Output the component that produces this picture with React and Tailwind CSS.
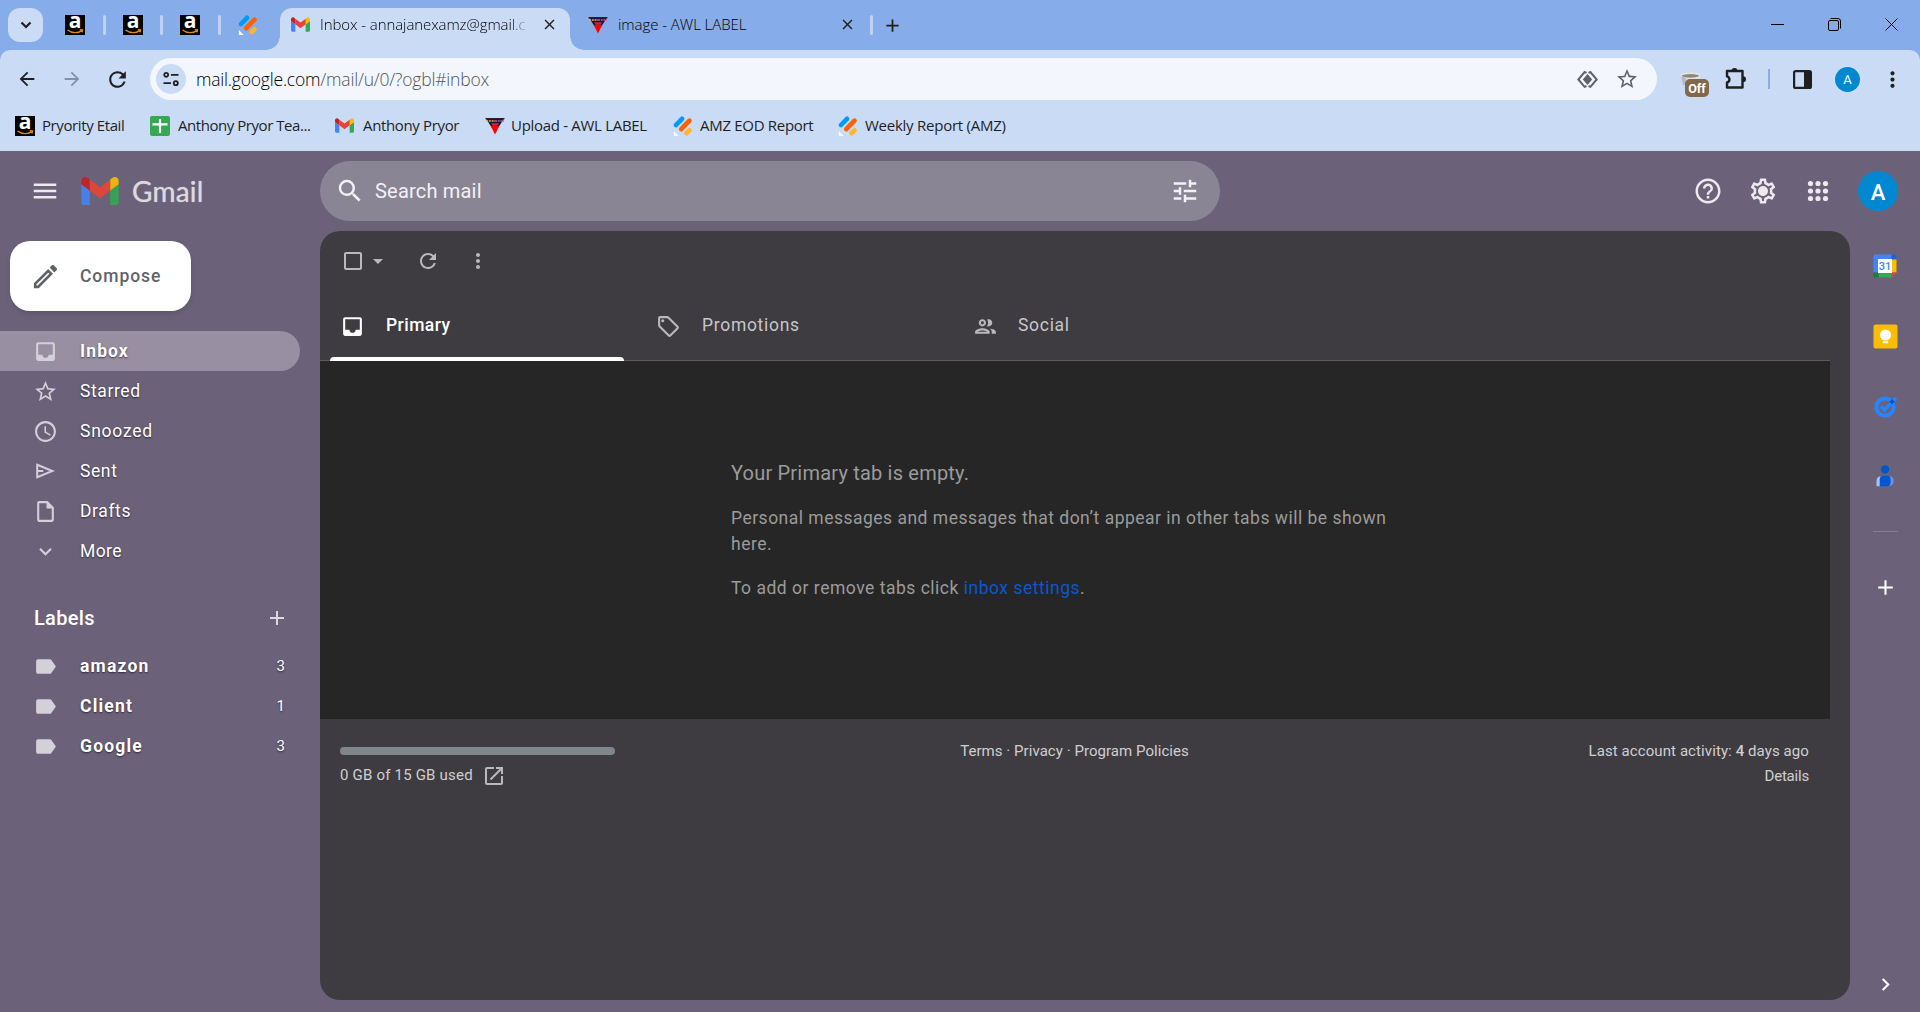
import {
  MdAccessTime,
  MdAdd,
  MdArrowBack,
  MdArrowDropDown,
  MdArrowForward,
  MdCheckBoxOutlineBlank,
  MdChevronRight,
  MdClose,
  MdHelpOutline,
  MdInbox,
  MdKeyboardArrowDown,
  MdLabel,
  MdMenu,
  MdMoreVert,
  MdOpenInNew,
  MdOutlineEdit,
  MdOutlineGroup,
  MdOutlineInsertDriveFile,
  MdOutlineLocalOffer,
  MdOutlineSettings,
  MdRefresh,
  MdSearch,
  MdStarBorder,
  MdTune,
} from 'react-icons/md'

/* ---------- Favicons and logos ---------- */

function AmazonIcon() {
  return (
    <svg className="w-5 h-5 shrink-0 overflow-visible" viewBox="0 0 20 20">
      <rect width="20" height="20" fill="#000" />
      <text x="10" y="13.300" fontSize="21" fontWeight="700" textAnchor="middle" fill="#fff" fontFamily="Open Sans">a</text>
      <path d="M2.500 15c4.500 3.400 10.500 3.400 14 .6M14.800 14.800l2.700.2-.6 2.400" fill="none" stroke="#e08a1a" strokeWidth="1.400" />
    </svg>
  )
}

function GmailIcon({ className }) {
  return (
    <svg className={className} viewBox="52 42 88 66">
      <path fill="#4285f4" d="M58 108h14V74L52 59v43c0 3.320 2.690 6 6 6" />
      <path fill="#34a853" d="M120 108h14c3.320 0 6-2.690 6-6V59l-20 15" />
      <path fill="#fbbc04" d="M120 48v26l20-15v-8c0-7.420-8.470-11.650-14.400-7.200" />
      <path fill="#ea4335" d="M72 74V48l24 18 24-18v26L96 92" />
      <path fill="#c5221f" d="M52 51v8l20 15V48l-5.600-4.200c-5.940-4.450-14.400-.22-14.400 7.200" />
    </svg>
  )
}

function JotformIcon() {
  return (
    <svg className="w-5 h-5 shrink-0" viewBox="0 0 20 20" fill="none" strokeLinecap="round" strokeWidth="4.600">
      <path stroke="#0099ff" d="M3 9l6-6.200" />
      <path stroke="#ff6100" d="M8.200 13.200l8.300-8.600" />
      <path stroke="#ffb629" d="M13.600 17.200l2.800-2.900" />
      <path fill="#fff" d="M.8 15v4.200c0 .5.300.8.8.8h4.200z" />
    </svg>
  )
}

function AwlIcon() {
  return (
    <svg className="w-5 h-5 shrink-0" viewBox="0 0 20 20">
      <path fill="#1b1238" d="M.6 2h18.800L13 12H7z" />
      <path fill="#3a1530" d="M.6 2h18.800v1.400H.6z" />
      <path stroke="#e8b84a" strokeWidth="1.300" strokeDasharray="2 .8" d="M1 5h9" />
      <path stroke="#c65a9c" strokeWidth="1.500" strokeDasharray="2 .7" d="M10 5h9" />
      <path fill="#e02030" d="M6 7.300h8L12.500 9.800h-5z" />
      <path fill="#f00" d="M5.800 10h8.400L10 18.500z" />
    </svg>
  )
}

function SheetIcon() {
  return (
    <svg className="w-5 h-5 shrink-0" viewBox="0 0 20 20">
      <rect width="20" height="20" rx="2" fill="#34a853" />
      <path d="M10 3v14M2.500 8.300h15" stroke="#fff" strokeWidth="2.200" />
    </svg>
  )
}

function SendIcon() {
  return (
    <svg className="w-[19px] h-4" viewBox="0 0 19 16" fill="none" stroke="currentColor" strokeWidth="2">
      <path d="M1.200 1.800L16.500 8 1.200 14.200z" />
      <path d="M1.200 8h6" />
    </svg>
  )
}

/* ---------- Browser chrome ---------- */

function PinnedTab({ children, last }) {
  return (
    <div className="relative w-[57.5px] h-[50px] flex items-center justify-center">
      {children}
      {!last && <span className="absolute -right-[1.500px] top-[15px] w-[3px] h-5 rounded-full bg-[#bfd4f5]" />}
    </div>
  )
}

function TabStrip() {
  return (
    <div className="h-[50px] flex items-center bg-[#86ace9] pl-2 text-[#1f1f1f]">
      <button className="w-[35px] h-[34px] rounded-xl bg-[#cadbf6] flex items-center justify-center mr-[3.500px]">
        <svg className="w-3 h-2" viewBox="0 0 12 8" fill="none" stroke="#1f1f1f" strokeWidth="2.200">
          <path d="M1.500 1.500L6 6l4.500-4.500" />
        </svg>
      </button>
      <PinnedTab><AmazonIcon /></PinnedTab>
      <PinnedTab><AmazonIcon /></PinnedTab>
      <PinnedTab><AmazonIcon /></PinnedTab>
      <PinnedTab last><JotformIcon /></PinnedTab>

      <div className="relative self-end ml-[3.500px] w-[290px] h-[42px] rounded-t-xl bg-[#cadbf6] flex items-center pl-[11px] pb-[9px]">
        <span className="absolute -left-3.5 bottom-0 w-3.5 h-3.5 bg-[radial-gradient(circle_at_0_0,transparent_13.500px,#cadbf6_14px)]" />
        <span className="absolute -right-3.5 bottom-0 w-3.5 h-3.5 bg-[radial-gradient(circle_at_100%_0,transparent_13.500px,#cadbf6_14px)]" />
        <GmailIcon className="w-[19px] h-[15px]" />
        <span className="ml-2.5 w-[208px] whitespace-nowrap text-[15px] font-light text-black tracking-[-0.08px] mask-r-from-92% mask-r-to-100%">
          Inbox - annajanexamz@gmail.c
        </span>
        <MdClose className="ml-[13px] w-[17px] h-[17px]" />
      </div>

      <div className="flex items-center w-[300px] pl-[18px] pb-px">
        <AwlIcon />
        <span className="ml-2.5 w-[221px] whitespace-nowrap text-[15px] font-light text-black tracking-[-0.05px]">image - AWL LABEL</span>
        <MdClose className="w-[17px] h-[17px]" />
      </div>
      <span className="w-[3px] h-5 rounded-full bg-[#bfd4f5]" />
      <MdAdd className="ml-[9px] w-[21px] h-[21px]" />

      <div className="ml-auto flex items-center gap-[44px] pr-[22px] pb-[2px] text-black">
        <svg className="w-[13px] h-[13px]" viewBox="0 0 13 13"><path d="M0 6.500h13" stroke="currentColor" /></svg>
        <svg className="w-[13px] h-[13px]" viewBox="0 0 13 13" fill="none" stroke="currentColor">
          <rect x=".5" y="2.500" width="10" height="10" rx="1.500" />
          <path d="M2.500.5H10A2.500 2.500 0 0 1 12.500 3v7.500" />
        </svg>
        <svg className="w-[13px] h-[13px]" viewBox="0 0 13 13"><path d="M.5.5l12 12M12.500.5l-12 12" stroke="currentColor" /></svg>
      </div>
    </div>
  )
}

function AddressBar() {
  return (
    <div className="flex items-center h-[42px] pl-4 text-[#1f1f1f]">
      <MdArrowBack className="w-[22px] h-[22px]" />
      <MdArrowForward className="ml-[23px] w-[22px] h-[22px] text-[#8391a8]" />
      <MdRefresh className="ml-[22px] w-[25px] h-[25px]" />
      <div className="ml-5 w-[1507px] h-[42px] rounded-full bg-[#f3f7fd] flex items-center pl-1.5 pr-[18px]">
        <span className="w-[30px] h-[30px] rounded-full bg-[#cadbf6] flex items-center justify-center">
          <svg className="w-4 h-4" viewBox="0 0 16 16" fill="none" stroke="#1f1f1f" strokeWidth="1.800">
            <circle cx="3.200" cy="3.800" r="2" />
            <path d="M8 3.800h7.500M.5 12.200H8" />
            <circle cx="12.800" cy="12.200" r="2" />
          </svg>
        </span>
        <span className="ml-2.5 text-[17.5px] font-light text-black whitespace-nowrap tracking-[-0.2px]">
          mail.google.com<span className="text-[#50545a]">/mail/u/0/?ogbl#inbox</span>
        </span>
        <svg className="ml-auto w-[21px] h-[17px]" viewBox="0 0 21 17" fill="none" stroke="#5f6368" strokeWidth="2">
          <path d="M9.500 1.800L7.600 1 1.300 8.500l6.300 7.300 1.900-.8M11.500 1.800l1.900-.8 6.300 7.500-6.300 7.300-1.900-.8" />
          <path d="M10.500 3l4.700 5.500-4.700 5.500-4.700-5.500z" fill="#5f6368" stroke="none" />
        </svg>
        <MdStarBorder className="ml-[17px] w-6 h-6 text-[#5f6368]" />
      </div>
      <div className="relative ml-[23px] w-[30px] h-[30px]">
        <svg className="w-5 h-5 mt-2" viewBox="0 0 20 20">
          <ellipse cx="10.500" cy="3.800" rx="9.500" ry="2.600" fill="#8b8982" stroke="#e9e7e0" strokeWidth="1.400" />
          <path d="M1 4l2 9h3V6z" fill="#b9bbbb" />
        </svg>
        <span className="absolute left-[5px] top-[15px] w-6 h-[18px] rounded-[5px] bg-[#82684a] text-white font-['Roboto',sans-serif] font-bold text-[12.5px] leading-[19px] text-center">
          Off
        </span>
      </div>
      <svg className="ml-[15px] w-[22px] h-[22px]" viewBox="0 0 22 22">
        <path d="M3 3h14.500v16.500H2v-5a3.200 3.200 0 0 0 0-6.200V3z" fill="none" stroke="currentColor" strokeWidth="2.400" strokeLinejoin="round" />
        <path d="M6.500 3a3 3 0 0 1 6 0zM18 8.300a3 3 0 0 1 0 6z" fill="currentColor" />
      </svg>
      <span className="ml-[21px] w-0.5 h-5 bg-[#86ace9]" />
      <svg className="ml-[23px] w-[19px] h-[19px]" viewBox="0 0 19 19">
        <rect x="1.100" y="1.100" width="16.800" height="16.800" rx="1.500" fill="none" stroke="currentColor" strokeWidth="2.200" />
        <path d="M11 1h7v17h-7z" fill="currentColor" />
      </svg>
      <span className="ml-[23px] w-[25px] h-[25px] rounded-full bg-[#0288d1] text-white text-[13px] leading-[26px] text-center font-['Roboto',sans-serif]">
        A
      </span>
      <MdMoreVert className="ml-[20px] w-[25px] h-[25px]" />
    </div>
  )
}

function Bookmarks() {
  return (
    <div className="flex items-center h-[51px] pl-[15px] text-[15px] text-[#1f1f1f] whitespace-nowrap">
      <div className="w-[135px] flex items-center gap-[7px]"><AmazonIcon /><span className="tracking-[-0.4px]">Pryority Etail</span></div>
      <div className="w-[185px] flex items-center gap-2"><SheetIcon /><span className="tracking-[-0.45px]">Anthony Pryor Tea...</span></div>
      <div className="w-[150px] flex items-center gap-[9px]">
        <GmailIcon className="w-[19px] h-[15px]" />
        <span className="tracking-[-0.35px]">Anthony Pryor</span>
      </div>
      <div className="w-[188px] flex items-center gap-1.5"><AwlIcon /><span className="tracking-[-0.3px]">Upload - AWL LABEL</span></div>
      <div className="w-[165px] flex items-center gap-[7px]"><JotformIcon /><span className="tracking-[-0.3px]">AMZ EOD Report</span></div>
      <div className="flex items-center gap-[7px]"><JotformIcon /><span className="tracking-[-0.25px]">Weekly Report (AMZ)</span></div>
    </div>
  )
}

function BrowserChrome() {
  return (
    <div className="bg-[#86ace9] font-['Open_Sans','Noto_Sans',sans-serif]">
      <TabStrip />
      <div className="h-[101px] rounded-t-[10px] bg-[#cadbf6] pt-2">
        <AddressBar />
        <Bookmarks />
      </div>
    </div>
  )
}

/* ---------- Gmail ---------- */

function Header() {
  return (
    <header className="h-20 shrink-0 flex items-center pl-[30px] pr-[22px] text-[#ece9ef]">
      <MdMenu className="w-[30px] h-[30px]" />
      <GmailIcon className="ml-[21px] w-[38px] h-[28px] opacity-90" />
      <span className="ml-[13px] w-[188px] font-['Lato',sans-serif] text-[28px] leading-8 tracking-[0.2px] text-[#dcdae0] text-shadow-[0_0_1px_rgba(220,218,224,0.8)]">
        Gmail
      </span>
      <div className="w-[900px] h-[60px] rounded-full bg-[#8a8595] flex items-center pl-[15px] pr-5 text-[#f3f1f5]">
        <MdSearch className="w-[30px] h-[30px]" />
        <span className="ml-2.5 text-[20px] tracking-[0.2px]">Search mail</span>
        <MdTune className="ml-auto w-[30px] h-[30px]" />
      </div>
      <div className="ml-auto flex items-center gap-[25px]">
        <MdHelpOutline className="w-[30px] h-[30px]" />
        <span className="relative w-[30px] h-[30px]">
          <MdOutlineSettings className="w-[30px] h-[30px]" />
          <span className="absolute left-[11px] top-[11px] w-2 h-2 rounded-full bg-[#ece9ef]" />
        </span>
        <svg className="w-[30px] h-[30px]" viewBox="0 0 30 30" fill="currentColor">
          {[7.500, 15, 22.500].map((y) =>
            [7.500, 15, 22.500].map((x) => <circle key={`${x}-${y}`} cx={x} cy={y} r="2.600" />)
          )}
        </svg>
        <span className="w-10 h-10 rounded-full bg-[#0288d1] text-white text-[22px] font-medium leading-[43px] text-center">A</span>
      </div>
    </header>
  )
}

const folders = [
  { name: 'Inbox', icon: <MdInbox className="w-[25px] h-[25px]" />, spacing: 'tracking-[1.1px]', active: true },
  { name: 'Starred', icon: <MdStarBorder className="w-[25px] h-[25px]" />, spacing: 'tracking-[0.6px]' },
  { name: 'Snoozed', icon: <MdAccessTime className="w-[25px] h-[25px]" />, spacing: 'tracking-[0.75px]' },
  { name: 'Sent', icon: <SendIcon />, spacing: 'tracking-[0.6px]' },
  { name: 'Drafts', icon: <MdOutlineInsertDriveFile className="w-[25px] h-[25px]" />, spacing: 'tracking-[0.6px]' },
  { name: 'More', icon: <MdKeyboardArrowDown className="w-[25px] h-[25px]" />, spacing: 'tracking-[0.4px]' },
]

const labels = [
  { name: 'amazon', count: 3 },
  { name: 'Client', count: 1 },
  { name: 'Google', count: 3 },
]

function Sidebar() {
  return (
    <nav className="w-[320px] shrink-0 pt-2.5 text-white text-[17.5px]">
      <button className="ml-2.5 w-[181px] h-[70px] rounded-[20px] bg-white shadow-md flex items-center pl-5 text-[#5f6368]">
        <MdOutlineEdit className="w-[31px] h-[31px]" />
        <span className="ml-[19px] font-medium tracking-[0.95px]">Compose</span>
      </button>
      <ul className="mt-5">
        {folders.map((f) => (
          <li
            key={f.name}
            className={`w-[300px] h-10 flex items-center pl-[33px] rounded-r-full ${f.active ? 'bg-[#9890a2] font-bold' : ''}`}
          >
            <span className="w-[25px] flex justify-center text-[#d4d0d9]">{f.icon}</span>
            <span className={`ml-[22px] text-shadow-[0_1px_2px_rgba(0,0,0,0.6)] ${f.spacing}`}>{f.name}</span>
          </li>
        ))}
      </ul>
      <div className="mt-[27px] h-10 flex items-center pl-[34px] pr-[31px]">
        <span className="text-[20px] font-medium tracking-[0.3px]">Labels</span>
        <MdAdd className="ml-auto w-[24px] h-[24px] text-[#dcd9e0]" />
      </div>
      <ul className="mt-2">
        {labels.map((l) => (
          <li key={l.name} className="w-[300px] h-10 flex items-center pl-[33px] pr-[15px]">
            <MdLabel className="w-[25px] h-[25px] text-[#d4d0d9]" />
            <span className="ml-[22px] font-bold tracking-[1.2px] text-shadow-[0_1px_2px_rgba(0,0,0,0.6)]">{l.name}</span>
            <span className="ml-auto text-[15px] text-shadow-[0_1px_2px_rgba(0,0,0,0.6)]">{l.count}</span>
          </li>
        ))}
      </ul>
    </nav>
  )
}

function MailPanel() {
  return (
    <main className="w-[1530px] h-[769px] rounded-[20px] bg-[#3e3c41] overflow-hidden text-[#b9b9bb]">
      <div className="h-[60px] flex items-center pl-[20.500px]">
        <MdCheckBoxOutlineBlank className="w-6 h-6" />
        <MdArrowDropDown className="ml-[1.500px] w-6 h-6" />
        <MdRefresh className="ml-[25.500px] w-6 h-6" />
        <MdMoreVert className="ml-[26px] w-6 h-6" />
      </div>

      <div className="w-[1510px] h-[70px] border-b border-[#5b5a5e] flex text-[17.5px] text-[#c6c6c8]">
        <div className="relative w-[316px] flex items-center pl-5 text-white">
          <MdInbox className="w-[25px] h-[25px] mt-px" />
          <span className="ml-[21px] font-medium tracking-[0.45px]">Primary</span>
          <span className="absolute left-2.5 -bottom-px w-[294px] h-1 rounded-t bg-white" />
        </div>
        <div className="w-[316px] flex items-center pl-5">
          <MdOutlineLocalOffer className="w-[25px] h-[25px] mt-px text-[#b9b9bb]" />
          <span className="ml-[21px] tracking-[0.7px]">Promotions</span>
        </div>
        <div className="flex items-center pl-[21px]">
          <MdOutlineGroup className="w-[25px] h-[25px] mt-0.5 text-[#b9b9bb]" />
          <span className="ml-[20px] tracking-[0.7px]">Social</span>
        </div>
      </div>

      <section className="w-[1510px] h-[358px] bg-[#262626] pt-[97px] pl-[411px] text-[#9b9b9b] text-[17.5px] leading-[26px]">
        <h2 className="text-[20px] leading-[30px] tracking-[0.2px]">Your Primary tab is empty.</h2>
        <p className="mt-[17px] whitespace-nowrap tracking-[0.49px]">
          Personal messages and messages that don’t appear in other tabs will be shown
          <br />
          here.
        </p>
        <p className="mt-[18px] tracking-[0.51px]">
          To add or remove tabs click <a className="text-[#0b57d0]">inbox settings</a>.
        </p>
      </section>

      <footer className="w-[1510px] flex items-start justify-between pl-5 pr-[21px] pt-5 text-[15px] leading-[25px] text-[#cfcfd1]">
        <div className="w-[275px] pt-2">
          <div className="h-2 rounded-full bg-[#80868b]" />
          <div className="mt-2 flex items-center">
            <span className="tracking-[0.2px]">0 GB of 15 GB used</span>
            <MdOpenInNew className="ml-[9px] w-6 h-6 text-[#b9b9bb]" />
          </div>
        </div>
        <div className="tracking-[0.05px]">Terms · Privacy · Program Policies</div>
        <div className="w-[275px] text-right tracking-[0.09px]">
          Last account activity: <span className="font-medium">4</span> days ago
          <br />
          <span className="tracking-[-0.2px]">Details</span>
        </div>
      </footer>
    </main>
  )
}

function SidePanel() {
  return (
    <aside className="w-[70px] h-[781px] flex flex-col items-center pt-[23px] pb-[15px] text-white">
      <svg className="w-6 h-6" viewBox="0 0 24 24">
        <path fill="#4285f4" d="M2 .5h17v5H5.500v13H.5V2C.5 1.200 1.200.5 2 .5z" />
        <path fill="#1967d2" d="M18.500.5H22c.8 0 1.500.7 1.500 1.500v3.500h-5z" />
        <path fill="#fbbc04" d="M18.500 5.500h5v13h-5z" />
        <path fill="#34a853" d="M5.500 18.500h13v5h-13z" />
        <path fill="#188038" d="M.5 18.500h5v5H2c-.8 0-1.500-.7-1.500-1.500z" />
        <path fill="#ea4335" d="M18.500 18.500h5l-5 5z" />
        <path fill="#fff" d="M5 5h14v14H5z" />
        <text x="12" y="16" fontSize="11" fontWeight="500" textAnchor="middle" fill="#4285f4" fontFamily="Roboto">31</text>
      </svg>
      <svg className="mt-[46px] w-[25px] h-[25px]" viewBox="0 0 25 25">
        <rect x=".5" y=".5" width="24" height="24" rx="2" fill="#fbbc04" />
        <circle cx="12.500" cy="11" r="5.500" fill="#fff" />
        <path d="M9.800 12h5.400v4H9.800zM9.800 17.300h5.400v2H9.800z" fill="#fff" />
      </svg>
      <svg className="mt-[45px] w-6 h-6" viewBox="0 0 24 24" fill="none">
        <circle cx="12" cy="13" r="8.600" stroke="#2684fc" strokeWidth="4" />
        <path d="M8 12.500l3.500 3.500 8-8.500" stroke="#2684fc" strokeWidth="3.600" />
        <circle cx="21.500" cy="5.500" r="2.200" fill="#2684fc" />
        <path d="M19 5l2.800 2.800L19 10.600l-2.800-2.800z" fill="#0057cc" />
      </svg>
      <svg className="mt-[46px] w-6 h-6" viewBox="0 0 24 24">
        <circle cx="12" cy="5.500" r="4.200" fill="#0057cc" />
        <path d="M7.500 12.200v10H3.500v-5c0-2.800 1.500-5 4-5z" fill="#a1c2fa" />
        <path d="M15 12h1c2.800 0 4.700 2.200 4.700 5s-1.900 5-4.700 5h-1z" fill="#5f95f5" />
        <path d="M10.500 11.800h4c2 0 3 1.500 3 3V19c0 2-1.500 3.300-3.300 3.300H6.700V15.500c0-2.200 1.800-3.700 3.800-3.700z" fill="#0057cc" />
      </svg>
      <span className="mt-[43px] w-[25px] h-px bg-[#857d92]" />
      <MdAdd className="mt-[43px] w-[25px] h-[25px]" />
      <MdChevronRight className="mt-auto w-[25px] h-[25px]" />
    </aside>
  )
}

export default function App() {
  return (
    <div className="w-[1920px] h-[1012px] flex flex-col overflow-hidden bg-[#6b627a]">
      <BrowserChrome />
      <div className="flex-1 flex flex-col font-['Roboto',sans-serif]">
        <Header />
        <div className="flex">
          <Sidebar />
          <MailPanel />
          <SidePanel />
        </div>
      </div>
    </div>
  )
}
